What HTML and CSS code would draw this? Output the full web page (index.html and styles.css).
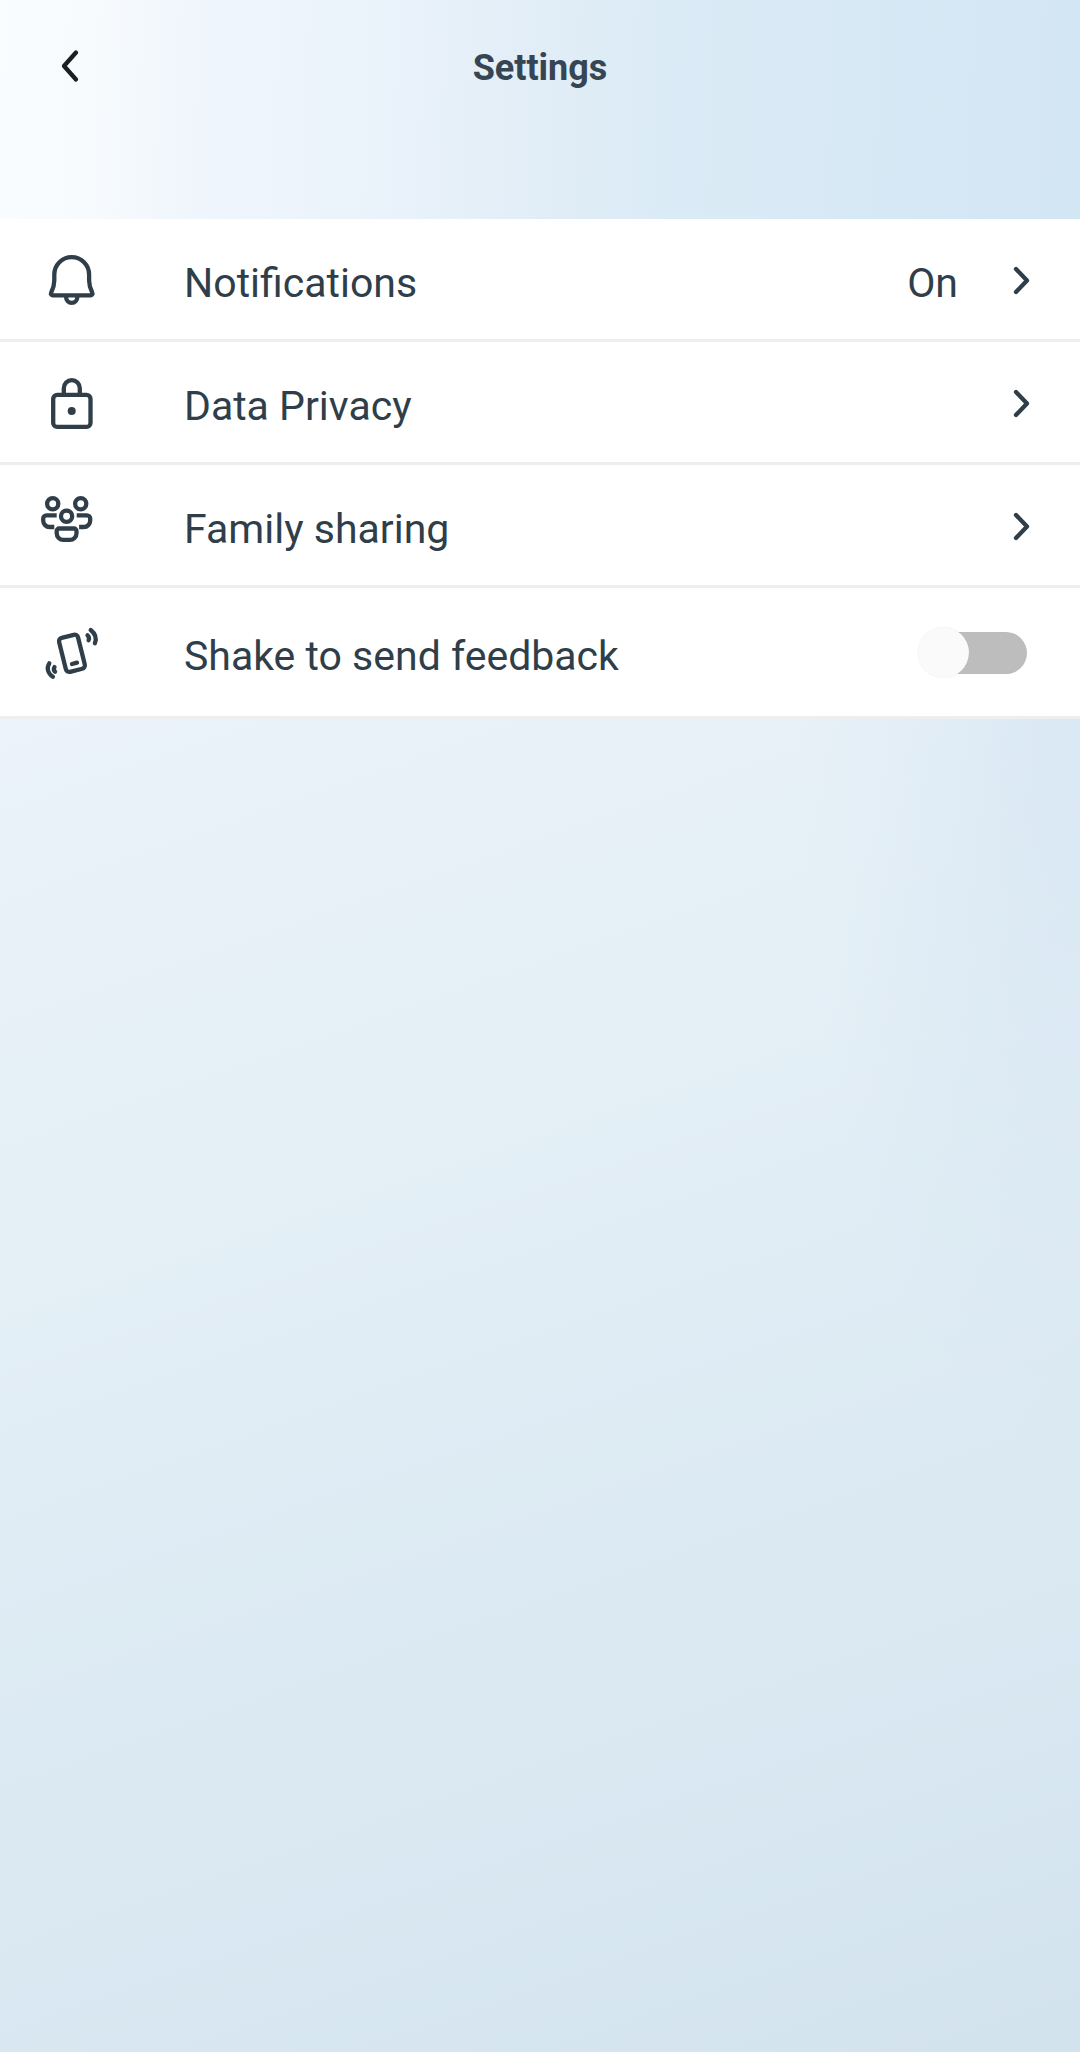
FILE: index.html
```html
<!DOCTYPE html>
<html lang="en">
<head>
  <meta charset="UTF-8">
  <meta name="viewport" content="width=device-width, initial-scale=1.0">
  <title>Settings</title>
  <link rel="stylesheet" href="styles.css">
</head>
<body>

  <header class="header">
    <a class="back" href="#" aria-label="Back">
      <svg width="20" height="34" viewBox="0 0 20 34"><path d="M16 3.5L4 17l12 13.5"/></svg>
    </a>
    <h1>Settings</h1>
  </header>

  <main class="list">
    <div class="row">
      <svg class="icon" viewBox="0 0 64 64">
        <path d="M14.3 27.6a17.4 17.4 0 0 1 34.8 0v6c0 4 .7 7 3 11.7.8 1.8.2 3-1.3 3H12.600c-1.500 0-2.100-1.200-1.300-3 2.300-4.700 3-7.700 3-11.700z"/>
        <path d="M26.1 49.500v.8a5.600 5.600 0 0 0 11.200 0v-.8"/>
      </svg>
      <span class="label">Notifications</span>
      <span class="value">On</span>
      <svg class="chevron" viewBox="0 0 20 32"><path d="M5 5l11 11.5L5 28"/></svg>
    </div>

    <div class="row">
      <svg class="icon" viewBox="0 0 64 64">
        <rect x="13.2" y="24.9" width="37.3" height="32" rx="4"/>
        <path d="M23.8 24.5v-6.300a8 8 0 0 1 16 0v6.300"/>
        <circle class="dot" cx="31.7" cy="41" r="4"/>
      </svg>
      <span class="label">Data Privacy</span>
      <svg class="chevron" viewBox="0 0 20 32"><path d="M5 5l11 11.5L5 28"/></svg>
    </div>

    <div class="row">
      <svg class="icon family" viewBox="0 0 64 64">
        <circle cx="12.7" cy="10.7" r="5.6"/>
        <circle cx="40.7" cy="10.7" r="5.6"/>
        <circle cx="26.6" cy="23.3" r="5.6"/>
        <path d="M16.700 22.300H6.500a3.300 3.300 0 0 0-3.300 3.300v2a6.400 6.400 0 0 0 6.400 6.400h4.700"/>
        <path d="M36.700 22.300h10.200a3.300 3.300 0 0 1 3.300 3.300v2a6.400 6.400 0 0 1-6.400 6.400h-4.700"/>
        <path d="M19.200 35.500h14.800a2.500 2.500 0 0 1 2.500 2.500v2.300a6.600 6.600 0 0 1-6.600 6.600h-6.600a6.600 6.600 0 0 1-6.600-6.600v-2.300a2.500 2.500 0 0 1 2.500-2.500z"/>
      </svg>
      <span class="label">Family sharing</span>
      <svg class="chevron" viewBox="0 0 20 32"><path d="M5 5l11 11.5L5 28"/></svg>
    </div>

    <div class="row row-toggle">
      <svg class="icon" viewBox="0 0 64 64">
        <rect x="22.2" y="15.8" width="19.5" height="35" rx="3.5" transform="rotate(-14 32 33.3)"/>
        <path d="M32 44l5-1.400"/>
        <path d="M50.700 10c5 4 6 8.500 4.200 13.200M47.500 15.200c1.600 1.600 1.900 3.300 1.100 5"/>
        <path d="M9.300 43.300c-3 4.700-1.500 10 3.600 13.500M14.500 47c-1 1.700-.8 3.400.6 4.800"/>
      </svg>
      <span class="label">Shake to send feedback</span>
      <span class="toggle" role="switch" aria-checked="false"><span class="thumb"></span></span>
    </div>
  </main>

</body>
</html>
```
FILE: styles.css
```css
* {
  box-sizing: border-box;
  margin: 0;
  padding: 0;
}

body {
  min-height: 2052px;
  font-family: Roboto, 'Liberation Sans', sans-serif;
  color: #2f3e49;
  background:
    radial-gradient(ellipse 280px 750px at 1080px 720px, rgba(208, 226, 242, 0.55), rgba(208, 226, 242, 0.2) 60%, rgba(208, 226, 242, 0) 100%),
    linear-gradient(161deg, #f3f9ff 0%, #ecf3fa 29%, #e4eff6 52%, #dceaf3 73%, #d3e3ee 100%);
}

.header {
  display: grid;
  grid-template-columns: 140px 1fr 140px;
  align-items: start;
  height: 219px;
  padding-top: 47px;
  background: linear-gradient(92deg, #f9fdff 0%, #f6fafd 10%, #eff5fc 20%, #e9f2fa 38%, #e1edf7 50%, #dbebf6 62%, #d7e8f5 82%, #d3e6f4 100%);
}

.header h1 {
  font-size: 36px;
  font-weight: bold;
  line-height: 42px;
  text-align: center;
  color: #364553;
}

.back {
  padding: 2px 0 0 60px;
}

svg {
  fill: none;
  stroke: #2f3e49;
  stroke-width: 4.3;
  stroke-linecap: round;
  stroke-linejoin: round;
}

.back svg {
  display: block;
  stroke: #1c1e20;
}

.list {
  background-color: #fff;
}

.row {
  display: flex;
  align-items: center;
  height: 123px;
  padding: 0 49px 0 40px;
  border-bottom: 3px solid #eee;
}

.row-toggle {
  height: 131px;
  padding-right: 53px;
}

.icon {
  width: 64px;
  height: 64px;
  margin-right: 80px;
}

.family {
  stroke-linecap: butt;
}

.dot {
  fill: #2f3e49;
  stroke: none;
}

.label,
.value {
  padding-top: 8px;
  font-size: 41px;
  line-height: 48px;
}

.label {
  flex: 1;
}

.value {
  margin-right: 53px;
}

.chevron {
  width: 20px;
  height: 32px;
  margin-top: 2px;
}

.toggle {
  position: relative;
  width: 101px;
  height: 42px;
  margin-top: 2px;
  border-radius: 21px;
  background-color: #bdbdbd;
}

.thumb {
  position: absolute;
  left: -8px;
  top: -5px;
  width: 51px;
  height: 51px;
  border-radius: 50%;
  background-color: #fafafa;
  box-shadow: 0 0 1px rgba(0, 0, 0, 0.12);
}
```
